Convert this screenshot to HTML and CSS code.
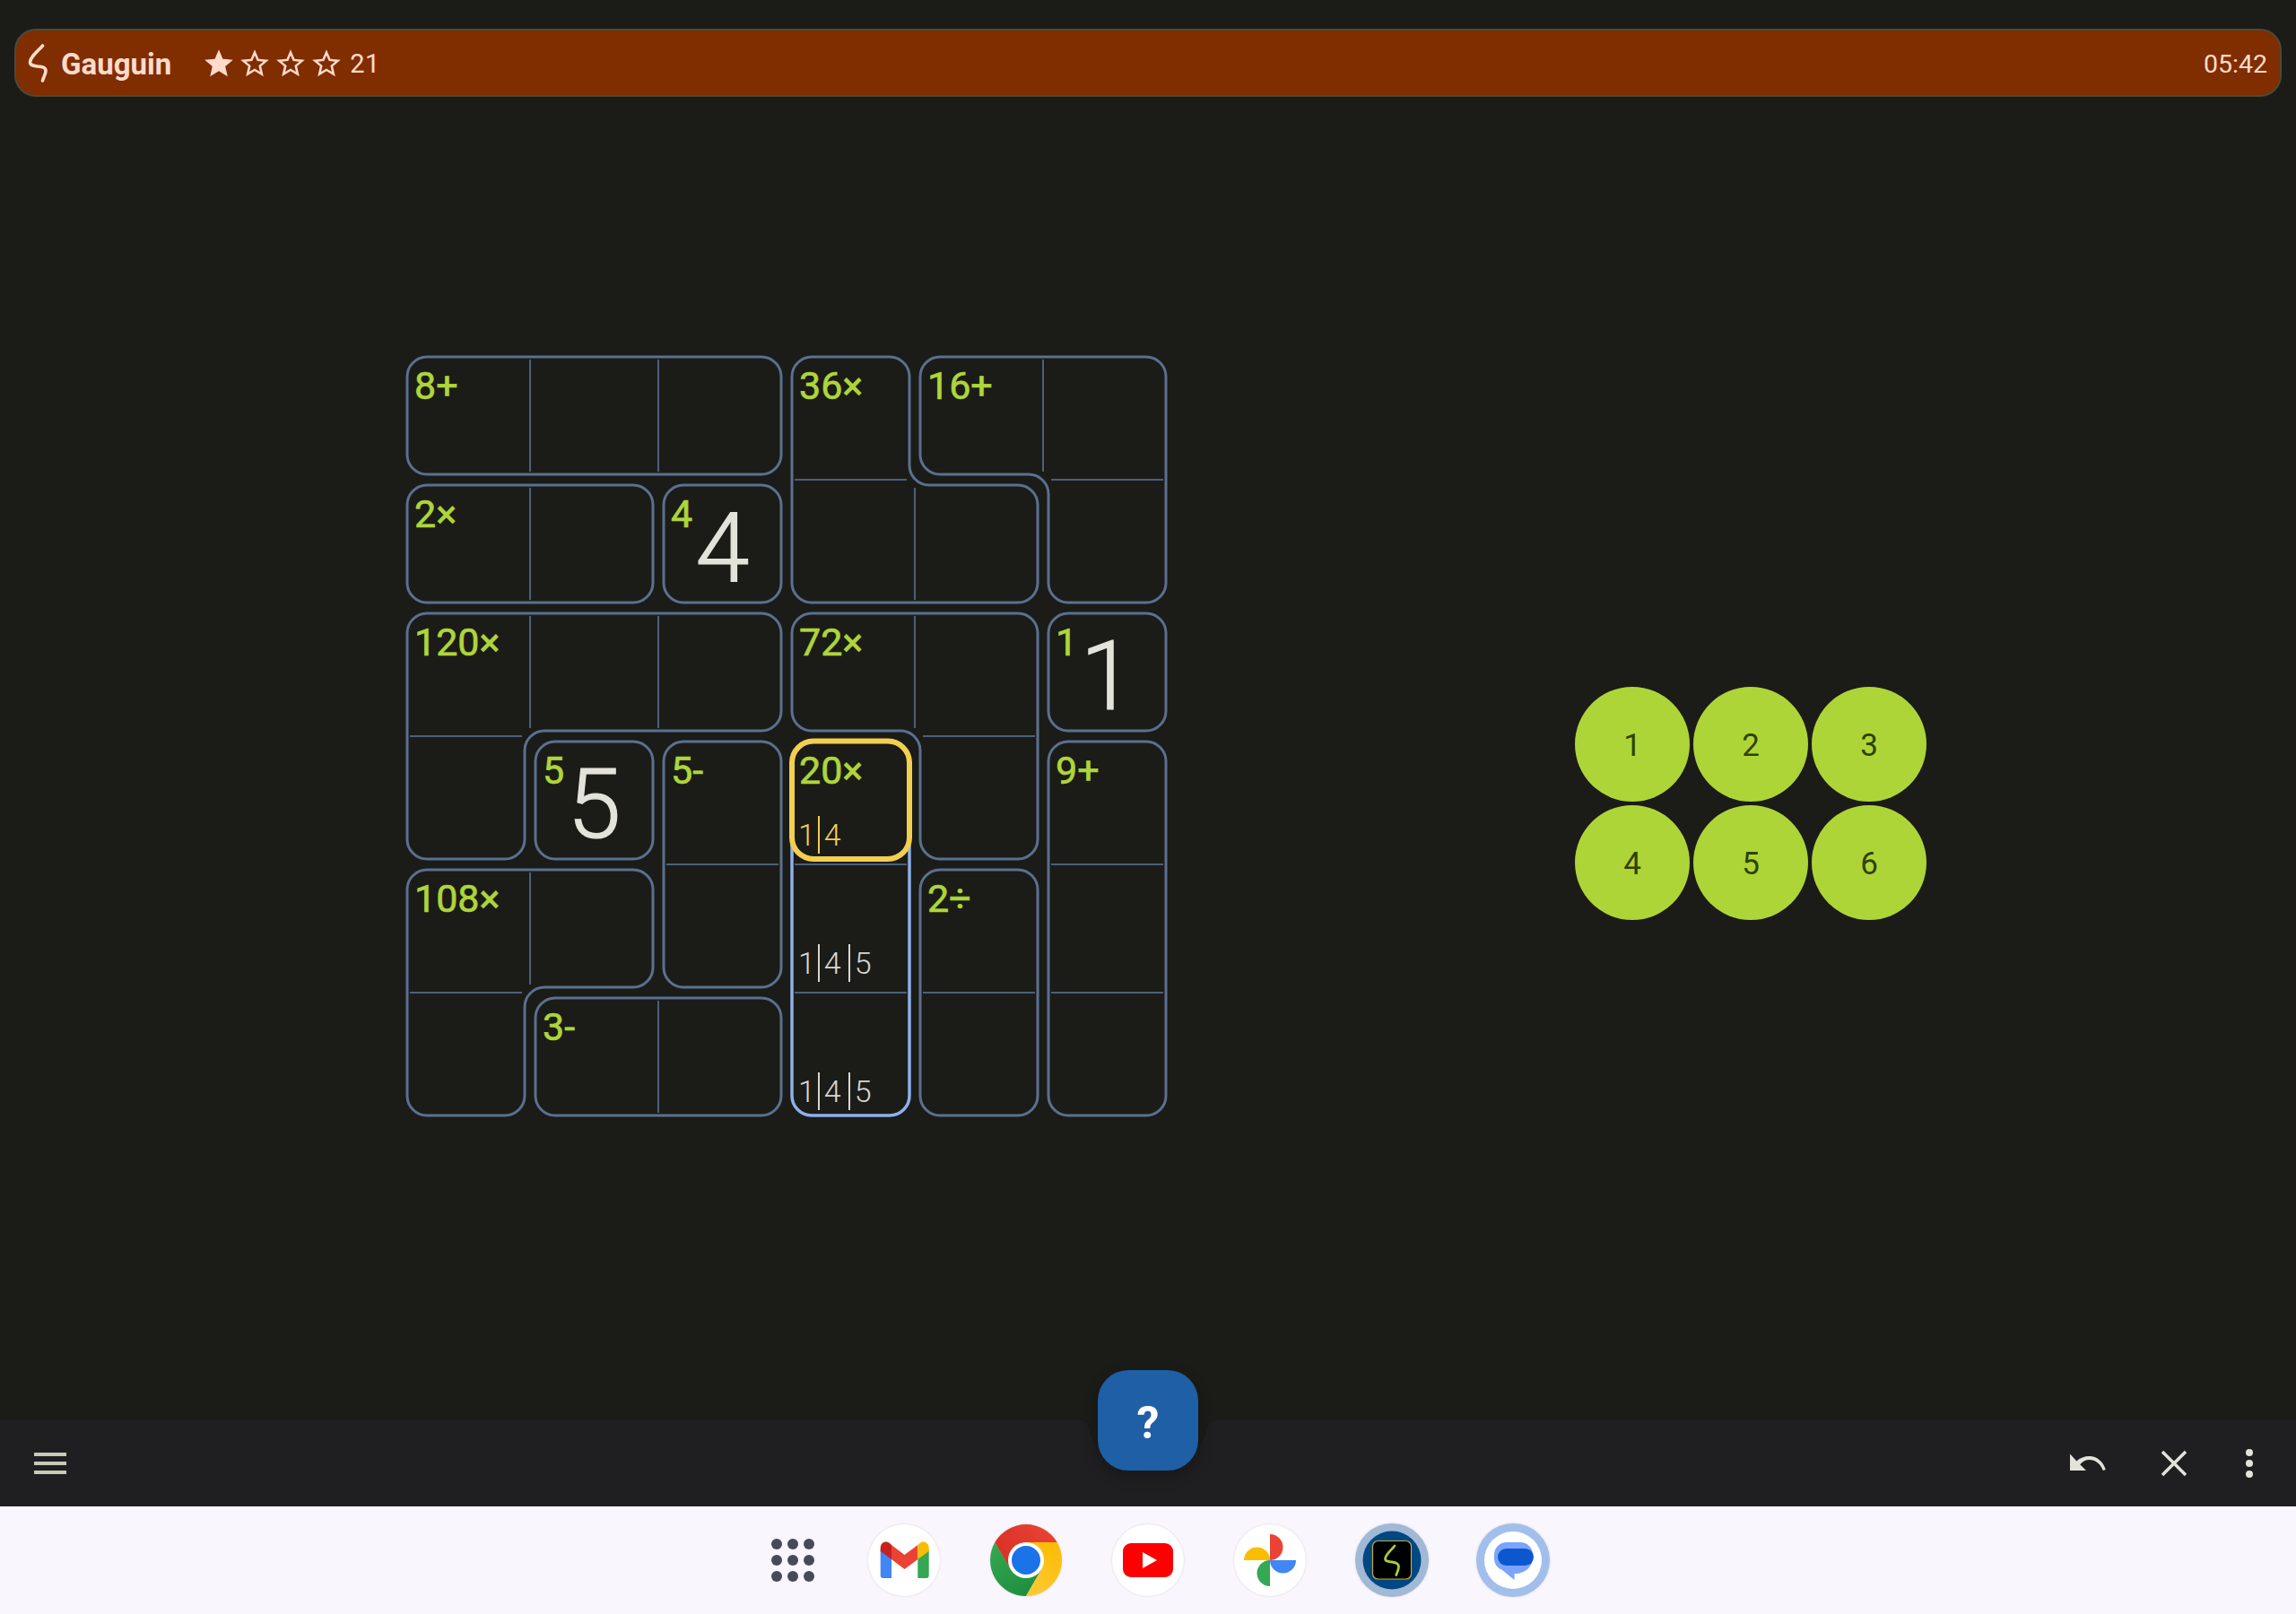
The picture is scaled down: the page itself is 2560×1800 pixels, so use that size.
FILE: index.html
```html
<!DOCTYPE html>
<html lang="en">
<head>
<meta charset="utf-8">
<title>Gauguin</title>
<link rel="stylesheet" href="styles.css">
</head>
<body>
<div class="app">
  <header class="appbar">
    <svg class="logo" viewBox="0 0 24 44" width="24" height="44"><path d="M17.5 3C11 10 3.5 16 3.5 21.5C3.5 25 8 25.5 12 26C17 26.5 21 27 21 31C21 35 18.5 38 17.5 42" fill="none" stroke="#ffdbcc" stroke-width="3.6" stroke-linecap="round" stroke-linejoin="round"/></svg>
    <span class="title">Gauguin</span>
    <div class="stars">
      <svg viewBox="0 0 24 24"><path d="M12 17.27L18.18 21l-1.64-7.03L22 9.24l-7.19-.61L12 2 9.19 8.63 2 9.24l5.46 4.73L5.82 21z"/></svg>
      <svg viewBox="0 0 24 24"><path d="M22 9.24l-7.19-.62L12 2 9.19 8.63 2 9.24l5.46 4.73L5.82 21 12 17.27 18.18 21l-1.63-7.03L22 9.24zM12 15.4l-3.76 2.27 1-4.28-3.32-2.88 4.38-.38L12 6.1l1.71 4.04 4.38.38-3.32 2.88 1 4.28L12 15.4z"/></svg>
      <svg viewBox="0 0 24 24"><path d="M22 9.24l-7.19-.62L12 2 9.19 8.63 2 9.24l5.46 4.73L5.82 21 12 17.27 18.18 21l-1.63-7.03L22 9.24zM12 15.4l-3.76 2.27 1-4.28-3.32-2.88 4.38-.38L12 6.1l1.71 4.04 4.38.38-3.32 2.88 1 4.28L12 15.4z"/></svg>
      <svg viewBox="0 0 24 24"><path d="M22 9.24l-7.19-.62L12 2 9.19 8.63 2 9.24l5.46 4.73L5.82 21 12 17.27 18.18 21l-1.63-7.03L22 9.24zM12 15.4l-3.76 2.27 1-4.28-3.32-2.88 4.38-.38L12 6.1l1.71 4.04 4.38.38-3.32 2.88 1 4.28L12 15.4z"/></svg>
    </div>
    <span class="score">21</span>
    <span class="timer">05:42</span>
  </header>

  <main class="play">
    <div class="board">
      <div class="cell"><span class="clue">8+</span></div>
      <div class="cell"></div>
      <div class="cell"></div>
      <div class="cell"><span class="clue">36×</span></div>
      <div class="cell"><span class="clue">16+</span></div>
      <div class="cell"></div>

      <div class="cell"><span class="clue">2×</span></div>
      <div class="cell"></div>
      <div class="cell"><span class="clue">4</span><span class="value">4</span></div>
      <div class="cell"></div>
      <div class="cell"></div>
      <div class="cell"></div>

      <div class="cell"><span class="clue">120×</span></div>
      <div class="cell"></div>
      <div class="cell"></div>
      <div class="cell"><span class="clue">72×</span></div>
      <div class="cell"></div>
      <div class="cell"><span class="clue">1</span><span class="value">1</span></div>

      <div class="cell"></div>
      <div class="cell"><span class="clue">5</span><span class="value">5</span></div>
      <div class="cell"><span class="clue">5-</span></div>
      <div class="cell"><span class="clue">20×</span><div class="notes notes-active"><span>1</span><span>4</span></div></div>
      <div class="cell"></div>
      <div class="cell"><span class="clue">9+</span></div>

      <div class="cell"><span class="clue">108×</span></div>
      <div class="cell"></div>
      <div class="cell"></div>
      <div class="cell"><div class="notes"><span>1</span><span>4</span><span>5</span></div></div>
      <div class="cell"><span class="clue">2÷</span></div>
      <div class="cell"></div>

      <div class="cell"></div>
      <div class="cell"><span class="clue">3-</span></div>
      <div class="cell"></div>
      <div class="cell"><div class="notes"><span>1</span><span>4</span><span>5</span></div></div>
      <div class="cell"></div>
      <div class="cell"></div>

      <svg class="cages" viewBox="0 0 858 858" width="858" height="858">
        <path class="inner" d="M143 9V134M286 9V134M715 9V134M143 152V277M572 152V277M143 295V420M286 295V420M572 295V420M143 581V706M286 724V849M438 143H563M724 143H849M9 429H134M581 429H706M295 572H420M438 572H563M724 572H849M9 715H134M438 715H563M581 715H706M724 715H849"/>
        <rect class="cage" x="6" y="6" width="417" height="131" rx="22"/>
        <rect class="cage" x="6" y="149" width="274" height="131" rx="22"/>
        <rect class="cage" x="292" y="149" width="131" height="131" rx="22"/>
        <rect class="cage" x="721" y="292" width="131" height="131" rx="22"/>
        <rect class="cage" x="149" y="435" width="131" height="131" rx="22"/>
        <rect class="cage" x="292" y="435" width="131" height="274" rx="22"/>
        <rect class="cage" x="721" y="435" width="131" height="417" rx="22"/>
        <rect class="cage" x="578" y="578" width="131" height="274" rx="22"/>
        <rect class="cage" x="149" y="721" width="274" height="131" rx="22"/>
        <path class="cage" d="M457 6H544A22 22 0 0 1 566 28V127A22 22 0 0 0 588 149H687A22 22 0 0 1 709 171V258A22 22 0 0 1 687 280H457A22 22 0 0 1 435 258V28A22 22 0 0 1 457 6Z"/>
        <path class="cage" d="M600 6H830A22 22 0 0 1 852 28V258A22 22 0 0 1 830 280H743A22 22 0 0 1 721 258V159A22 22 0 0 0 699 137H600A22 22 0 0 1 578 115V28A22 22 0 0 1 600 6Z"/>
        <path class="cage" d="M28 292H401A22 22 0 0 1 423 314V401A22 22 0 0 1 401 423H159A22 22 0 0 0 137 445V544A22 22 0 0 1 115 566H28A22 22 0 0 1 6 544V314A22 22 0 0 1 28 292Z"/>
        <path class="cage" d="M457 292H687A22 22 0 0 1 709 314V544A22 22 0 0 1 687 566H600A22 22 0 0 1 578 544V445A22 22 0 0 0 556 423H457A22 22 0 0 1 435 401V314A22 22 0 0 1 457 292Z"/>
        <path class="cage" d="M28 578H258A22 22 0 0 1 280 600V687A22 22 0 0 1 258 709H159A22 22 0 0 0 137 731V830A22 22 0 0 1 115 852H28A22 22 0 0 1 6 830V600A22 22 0 0 1 28 578Z"/>
        <rect class="cage-active" x="435" y="435" width="131" height="417" rx="22"/>
        <rect class="cell-active" x="435" y="434.5" width="131" height="131.5" rx="24"/>
      </svg>
    </div>

    <div class="keypad">
      <button class="key">1</button>
      <button class="key">2</button>
      <button class="key">3</button>
      <button class="key">4</button>
      <button class="key">5</button>
      <button class="key">6</button>
    </div>
  </main>

  <div class="toolbar">
    <svg class="notch" viewBox="0 0 160 40" width="160" height="40"><path d="M0 0C8 0 12 2 14 10C16 20 20 28 26 32H134C140 28 144 20 146 10C148 2 152 0 160 0Z"/></svg>
    <button class="fab">?</button>
    <div class="menu"><span></span><span></span><span></span></div>
    <div class="actions">
      <svg class="undo" viewBox="0 0 24 24" width="48" height="48"><path d="M2 6.8V16h9L7.6 12.6C9 10.9 11 10 12.8 10c3.3 0 6.2 2.2 7.6 6l1.5-.5C20.5 11 17 8 12.8 8c-2.7 0-5.2 1-7.1 2.7z"/></svg>
      <svg class="close" viewBox="0 0 48 48" width="48" height="48"><path d="M11 11L37 37M37 11L11 37"/></svg>
      <svg class="more" viewBox="0 0 48 48" width="48" height="48"><circle cx="24" cy="12" r="4"/><circle cx="24" cy="24" r="4"/><circle cx="24" cy="36" r="4"/></svg>
    </div>
  </div>

  <nav class="dock">
    <svg class="launcher" viewBox="0 0 48 48" width="48" height="48"><g fill="#484a58"><circle cx="6" cy="6" r="6"/><circle cx="24" cy="6" r="6"/><circle cx="42" cy="6" r="6"/><circle cx="6" cy="24" r="6"/><circle cx="24" cy="24" r="6"/><circle cx="42" cy="24" r="6"/><circle cx="6" cy="42" r="6"/><circle cx="24" cy="42" r="6"/><circle cx="42" cy="42" r="6"/></g></svg>

    <svg class="app" viewBox="0 0 80 80" width="80" height="80">
      <circle cx="40" cy="40" r="40" fill="#fff"/>
      <path d="M13.7 28L26 37V60H16.7A3 3 0 0 1 13.7 57Z" fill="#4285f4"/>
      <path d="M67.7 28L55.3 37V60H64.7A3 3 0 0 0 67.7 57Z" fill="#34a853"/>
      <path d="M26 23L40.5 34L55.3 23V39L40.5 50L26 39Z" fill="#ea4335"/>
      <path d="M13.7 26C13.7 20 20 17.5 24 21L26 23V39L13.7 30Z" fill="#c5221f"/>
      <path d="M67.7 26C67.7 20 61 17.5 57.3 21L55.3 23V39L67.7 30Z" fill="#fbbc04"/>
    </svg>

    <svg class="app" viewBox="0 0 80 80" width="80" height="80">
      <defs>
        <linearGradient id="cr" x1="0" y1="0.7" x2="1" y2="0.2"><stop offset="0" stop-color="#d93025"/><stop offset="1" stop-color="#ea4335"/></linearGradient>
        <linearGradient id="cg" x1="0.7" y1="1" x2="0.1" y2="0"><stop offset="0" stop-color="#1e8e3e"/><stop offset="1" stop-color="#34a853"/></linearGradient>
        <linearGradient id="cy" x1="0.3" y1="1" x2="0.7" y2="0"><stop offset="0" stop-color="#fcc934"/><stop offset="1" stop-color="#fbbc04"/></linearGradient>
      </defs>
      <path d="M40 40L5.4 20L40 80Z" fill="url(#cg)"/>
      <path d="M5.4 20A40 40 0 0 0 40 80L57.3 50H22.7Z" fill="url(#cg)"/>
      <path d="M74.6 20A40 40 0 0 1 40 80L57.3 50L40 20Z" fill="url(#cy)"/>
      <path d="M74.6 20A40 40 0 0 0 5.4 20L22.7 50L40 40L40 20Z" fill="url(#cr)"/>
      <circle cx="40" cy="40" r="20" fill="#fff"/>
      <circle cx="40" cy="40" r="16" fill="#1a73e8"/>
    </svg>

    <svg class="app" viewBox="0 0 80 80" width="80" height="80">
      <circle cx="40" cy="40" r="40" fill="#fff"/>
      <rect x="12" y="21" width="56" height="38" rx="9" fill="#f00"/>
      <path d="M34 31L50 40L34 49Z" fill="#fff"/>
    </svg>

    <svg class="app" viewBox="-40 -40 80 80" width="80" height="80">
      <circle cx="0" cy="0" r="40" fill="#fff"/>
      <path d="M0 0V-29A14.5 14.5 0 0 1 0 0Z" fill="#ea4335"/>
      <path d="M0 0H29A14.5 14.5 0 0 1 0 0Z" fill="#4285f4"/>
      <path d="M0 0V29A14.5 14.5 0 0 1 0 0Z" fill="#34a853"/>
      <path d="M0 0H-29A14.5 14.5 0 0 1 0 0Z" fill="#fbbc04"/>
    </svg>

    <svg class="app app-ring" viewBox="0 0 80 80" width="80" height="80">
      <circle cx="40" cy="40" r="41" fill="#a1b9d6"/>
      <circle cx="40" cy="40" r="32.5" fill="#004881"/>
      <rect x="18.5" y="18.5" width="43" height="42.5" rx="6" fill="#000" stroke="#c9a93c" stroke-width="1.2"/>
      <path d="M43 24C39 29 32.5 34 32.5 38.5C32.5 41.5 36 41.5 40 42C44 42.5 47.5 43.5 47.5 47C47.5 51 45.5 54 44.7 56.5" fill="none" stroke="#a9ce36" stroke-width="2.8" stroke-linecap="round"/>
    </svg>

    <svg class="app app-ring app-last" viewBox="-40 -40 80 80" width="80" height="80">
      <circle cx="0" cy="0" r="41" fill="#a2bfec"/>
      <circle cx="0" cy="0" r="32" fill="#fff"/>
      <path d="M-7 -20H8A14 14 0 0 1 22 -6V-2C22 7 13 15 3 15H1.5V22L-12 11A14 14 0 0 1 -21 -1V-6A14 14 0 0 1 -7 -20Z" fill="#7ba4fb"/>
      <rect x="-17" y="-13" width="40" height="19" rx="9.5" fill="#0b57d0"/>
    </svg>
  </nav>
</div>
</body>
</html>
```
FILE: styles.css
```css
* { box-sizing: border-box; }
html, body { margin: 0; padding: 0; }
body { background: #1b1c18; font-family: Roboto, "Liberation Sans", sans-serif; }
button { font: inherit; border: 0; padding: 0; }

.app { width: 2560px; height: 1800px; display: flex; flex-direction: column; overflow: hidden; }

.appbar {
  flex: none; height: 76px; margin: 32px 16px 0;
  display: flex; align-items: center; padding: 2px 14px 0 12px;
  background: #802d00; border: 2px solid #4b4a37; border-radius: 24px;
  color: #ffdbcc;
}
.logo { flex: none; margin: -2px 14px 0 0; }
.title { font-size: 33px; font-weight: 700; }
.stars { display: flex; margin-left: 34px; gap: 2px; }
.stars svg { width: 38px; height: 38px; fill: #ffdbcc; display: block; }
.score { font-size: 29px; margin-left: 7px; letter-spacing: 0.4px; }
.timer { font-size: 28.5px; margin-left: auto; }

.play { flex: 1; min-height: 0; display: flex; align-items: flex-start; padding: 284px 0 0 448px; }

.board {
  position: relative; flex: none; width: 858px; height: 858px;
  display: grid; grid-template-columns: repeat(6, 143px); grid-template-rows: repeat(6, 143px);
}
.cell { display: grid; min-width: 0; min-height: 0; }
.cell > * { grid-area: 1 / 1; }
.clue {
  font-size: 43px; line-height: 48px; font-weight: 400; color: #aed53a;
  -webkit-text-stroke: 0.7px #aed53a;
  padding: 14px 0 0 14px; align-self: start; justify-self: start;
}
.value {
  font-size: 108px; font-weight: 300; line-height: 134px; color: #e3e3dc;
  -webkit-text-stroke: 1.2px #e3e3dc;
  padding-top: 9px; text-align: center;
}
.notes {
  display: flex; align-self: end; justify-self: start;
  margin: 0 0 12px 13px; font-size: 34px; font-weight: 300; line-height: 42px; color: #d8d8d0;
}
.notes span { padding: 0 8px 0 5px; }
.notes span:first-child { padding: 0 3px 0 0; }
.notes span + span { border-left: 2.5px solid currentColor; }
.notes-active { color: #f3cf50; }

.cages { position: absolute; left: 0; top: 0; pointer-events: none; fill: none; }
.inner { stroke: #4f5f78; stroke-width: 2; }
.cage { stroke: #5b7090; stroke-width: 3; fill: none; }
.cage-active { stroke: #8fb0e8; stroke-width: 3.5; fill: none; }
.cell-active { stroke: #f3cf50; stroke-width: 6; fill: none; }

.keypad {
  flex: none; margin: 374px 0 0 450px;
  display: grid; grid-template-columns: repeat(3, 128px); grid-auto-rows: 128px; gap: 4px;
}
.key {
  border-radius: 50%; background: #aed538; color: #2f4200; font-size: 35px; padding-top: 2px;
  display: flex; align-items: center; justify-content: center;
}

.toolbar {
  flex: none; position: relative; height: 96px; background: #1f1f21;
  display: flex; align-items: center; justify-content: space-between; padding: 0 28px 0 38px;
}
.notch { position: absolute; left: 1200px; top: -1px; fill: #1b1c18; }
.fab {
  position: absolute; left: 1224px; top: -56px; width: 112px; height: 112px; padding-top: 5px;
  border-radius: 34px; background: #1f5fa6; color: #fff; font-size: 50px; font-weight: 700;
  box-shadow: 0 6px 16px rgba(0, 0, 0, 0.25);
  display: flex; align-items: center; justify-content: center;
}
.menu { display: flex; flex-direction: column; gap: 6px; width: 36px; }
.menu span { display: block; height: 4px; background: #c8cab9; }
.actions { display: flex; gap: 48px; align-items: center; }
.actions svg { display: block; fill: #e3e3dc; }
.actions .more { margin-left: -12px; }
.close path { stroke: #e3e3dc; stroke-width: 3.5; fill: none; }

.dock {
  flex: none; height: 120px; background: #f9f6fd;
  display: flex; align-items: center; padding-left: 860px;
}
.launcher { flex: none; margin-right: 60px; }
.app { flex: none; }
.dock .app { width: 80px; height: 80px; margin-right: 56px; overflow: visible; filter: drop-shadow(0 0 1px rgba(0, 0, 0, 0.15)); }
.dock .app-last { margin-left: -1px; }
```
